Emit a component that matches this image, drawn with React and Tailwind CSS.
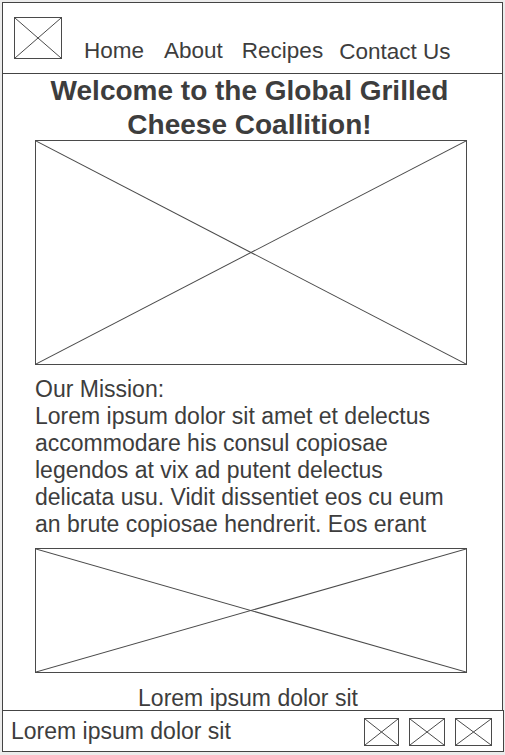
import React from 'react'

const ink = 'text-[#3d3d3d]'

function Placeholder({ className = '' }) {
  return (
    <div className={`relative border border-[#4a4a4a] bg-white ${className}`}>
      <svg className="absolute inset-0 w-full h-full" viewBox="0 0 100 100" preserveAspectRatio="none">
        <line x1="0" y1="0" x2="100" y2="100" stroke="#4a4a4a" strokeWidth="1" vectorEffect="non-scaling-stroke" />
        <line x1="100" y1="0" x2="0" y2="100" stroke="#4a4a4a" strokeWidth="1" vectorEffect="non-scaling-stroke" />
      </svg>
    </div>
  )
}

export default function App() {
  return (
    <div
      className={`w-[505px] h-[755px] bg-[#ececec] pt-[2px] pl-[2px] overflow-hidden ${ink}`}
      style={{ fontFamily: '"Liberation Sans", Arial, sans-serif' }}
    >
      {/* Page frame */}
      <div className="w-[501px] h-[708px] bg-white border-t border-x border-[#444] overflow-hidden">
        {/* Header */}
        <header className="h-[71px] border-b border-[#444] flex items-start pt-[14px] pl-[11px]">
          <Placeholder className="w-[48px] h-[42px] shrink-0" />
          <nav className="flex items-start mt-[21px] ml-[22px] text-[22.5px] leading-[26px] whitespace-nowrap">
            <span>Home</span>
            <span className="ml-[20px]">About</span>
            <span className="ml-[19px]">Recipes</span>
            <span className="ml-[16px] mt-px">Contact Us</span>
          </nav>
        </header>

        <h1 className="pr-[6px] text-center text-[28px] leading-[34px] font-bold">
          Welcome to the Global Grilled Cheese Coallition!
        </h1>

        <Placeholder className="ml-[32px] -mt-[2px] w-[432px] h-[225px]" />

        <div className="ml-[32px] mt-[11px] w-[432px] h-[162px] overflow-hidden text-[23px] leading-[27px]">
          <p>Our Mission:</p>
          <p>
            Lorem ipsum dolor sit amet et delectus accommodare his consul copiosae legendos at vix ad putent
            delectus delicata usu. Vidit dissentiet eos cu eum an brute copiosae hendrerit. Eos erant dolorum
            an. Per facer affert ut.
          </p>
        </div>

        <Placeholder className="ml-[32px] mt-[10px] w-[432px] h-[125px]" />

        <p className="mt-[12px] text-center pr-[9px] text-[23px] leading-[27px]">Lorem ipsum dolor sit</p>
      </div>

      {/* Footer */}
      <footer className="w-[502px] h-[42px] bg-white border border-[#444] flex items-center pl-[8px] pr-[11px]">
        <span className="text-[23px] leading-[27px] mt-px">Lorem ipsum dolor sit</span>
        <div className="ml-auto flex items-center gap-[10px] mt-[2px]">
          <Placeholder className="w-[35px] h-[28px]" />
          <Placeholder className="w-[36px] h-[28px]" />
          <Placeholder className="w-[37px] h-[28px]" />
        </div>
      </footer>
    </div>
  )
}
